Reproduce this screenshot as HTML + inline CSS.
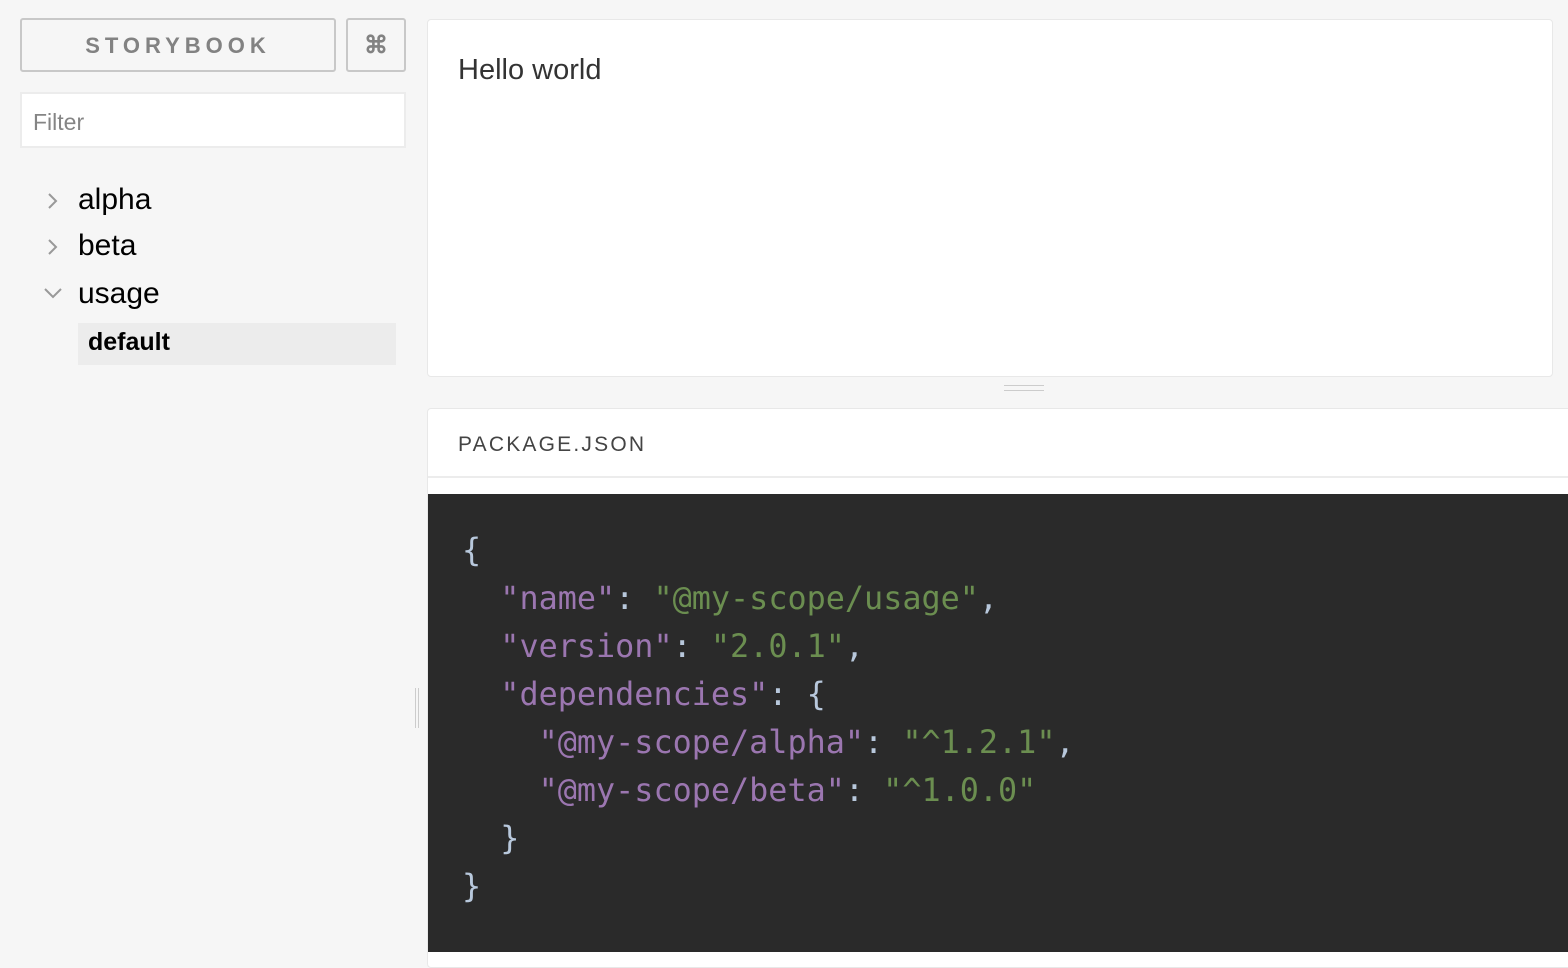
<!DOCTYPE html>
<html><head><meta charset="utf-8"><style>
body{margin:0;width:1568px;height:952px;background:#f6f6f6;position:relative;overflow:hidden;font-family:"Liberation Sans",sans-serif}
.abs{position:absolute}
.btn{border:2px solid #c8c8c8;border-radius:3px;box-sizing:border-box;background:#f6f6f6}
.tree{font-size:30px;color:#000}
pre{margin:0;font-family:"DejaVu Sans Mono",monospace;font-size:31.8px;line-height:48px;color:#b8c8dc}
.k{color:#9b76b0}.s{color:#6b8e50}
</style></head><body>
<div class="abs btn" style="left:20px;top:18px;width:316px;height:54px;text-align:center;line-height:52px;font-size:22px;font-weight:bold;letter-spacing:5px;color:#828282">STORYBOOK</div>
<div class="abs btn" style="left:346px;top:18px;width:60px;height:54px;text-align:center;line-height:52px;font-size:24px;font-weight:bold;color:#828282">⌘</div>
<div class="abs" style="left:20px;top:92px;width:386px;height:56px;box-sizing:border-box;border:2px solid #ececec;background:#fff;font-size:23px;color:#858585;line-height:56px;padding-left:11px">Filter</div>
<svg class="abs" style="left:44px;top:188px" width="24" height="130" fill="none" stroke="#999" stroke-width="2">
<path d="M5 6l7 7-7 7"/><path d="M5 52l7 7-7 7"/><path d="M1 101l8 8 8-8"/></svg>
<div class="abs tree" style="left:78px;top:183px">alpha</div>
<div class="abs tree" style="left:78px;top:229px">beta</div>
<div class="abs tree" style="left:78px;top:277px">usage</div>
<div class="abs" style="left:78px;top:323px;width:318px;height:42px;background:#ececec;font-size:25px;font-weight:bold;line-height:38px;padding-left:10px;box-sizing:border-box">default</div>
<div class="abs" style="left:415px;top:688px;width:4px;height:40px;border-left:1px solid #ccc;border-right:1px solid #ccc;box-sizing:border-box"></div>
<div class="abs" style="left:427px;top:19px;width:1126px;height:358px;background:#fff;border:1px solid #e8e8e8;border-radius:4px;box-sizing:border-box"></div>
<div class="abs" style="left:458px;top:54px;font-size:29px;color:#333">Hello world</div>
<div class="abs" style="left:1004px;top:385px;width:40px;height:4px;border-top:1px solid #ccc;border-bottom:1px solid #ccc"></div>
<div class="abs" style="left:427px;top:408px;width:1150px;height:560px;background:#fff;border:1px solid #e8e8e8;border-radius:4px;box-sizing:border-box"></div>
<div class="abs" style="left:428px;top:476px;width:1140px;height:2px;background:#ececec"></div>
<div class="abs" style="left:458px;top:433px;font-size:21px;letter-spacing:2.2px;color:#444">PACKAGE.JSON</div>
<div class="abs" style="left:428px;top:494px;width:1140px;height:458px;background:#2a2a2a"></div>
<pre class="abs" style="left:462px;top:527px">{
  <span class="k">"name"</span>: <span class="s">"@my-scope/usage"</span>,
  <span class="k">"version"</span>: <span class="s">"2.0.1"</span>,
  <span class="k">"dependencies"</span>: {
    <span class="k">"@my-scope/alpha"</span>: <span class="s">"^1.2.1"</span>,
    <span class="k">"@my-scope/beta"</span>: <span class="s">"^1.0.0"</span>
  }
}</pre>
</body></html>
